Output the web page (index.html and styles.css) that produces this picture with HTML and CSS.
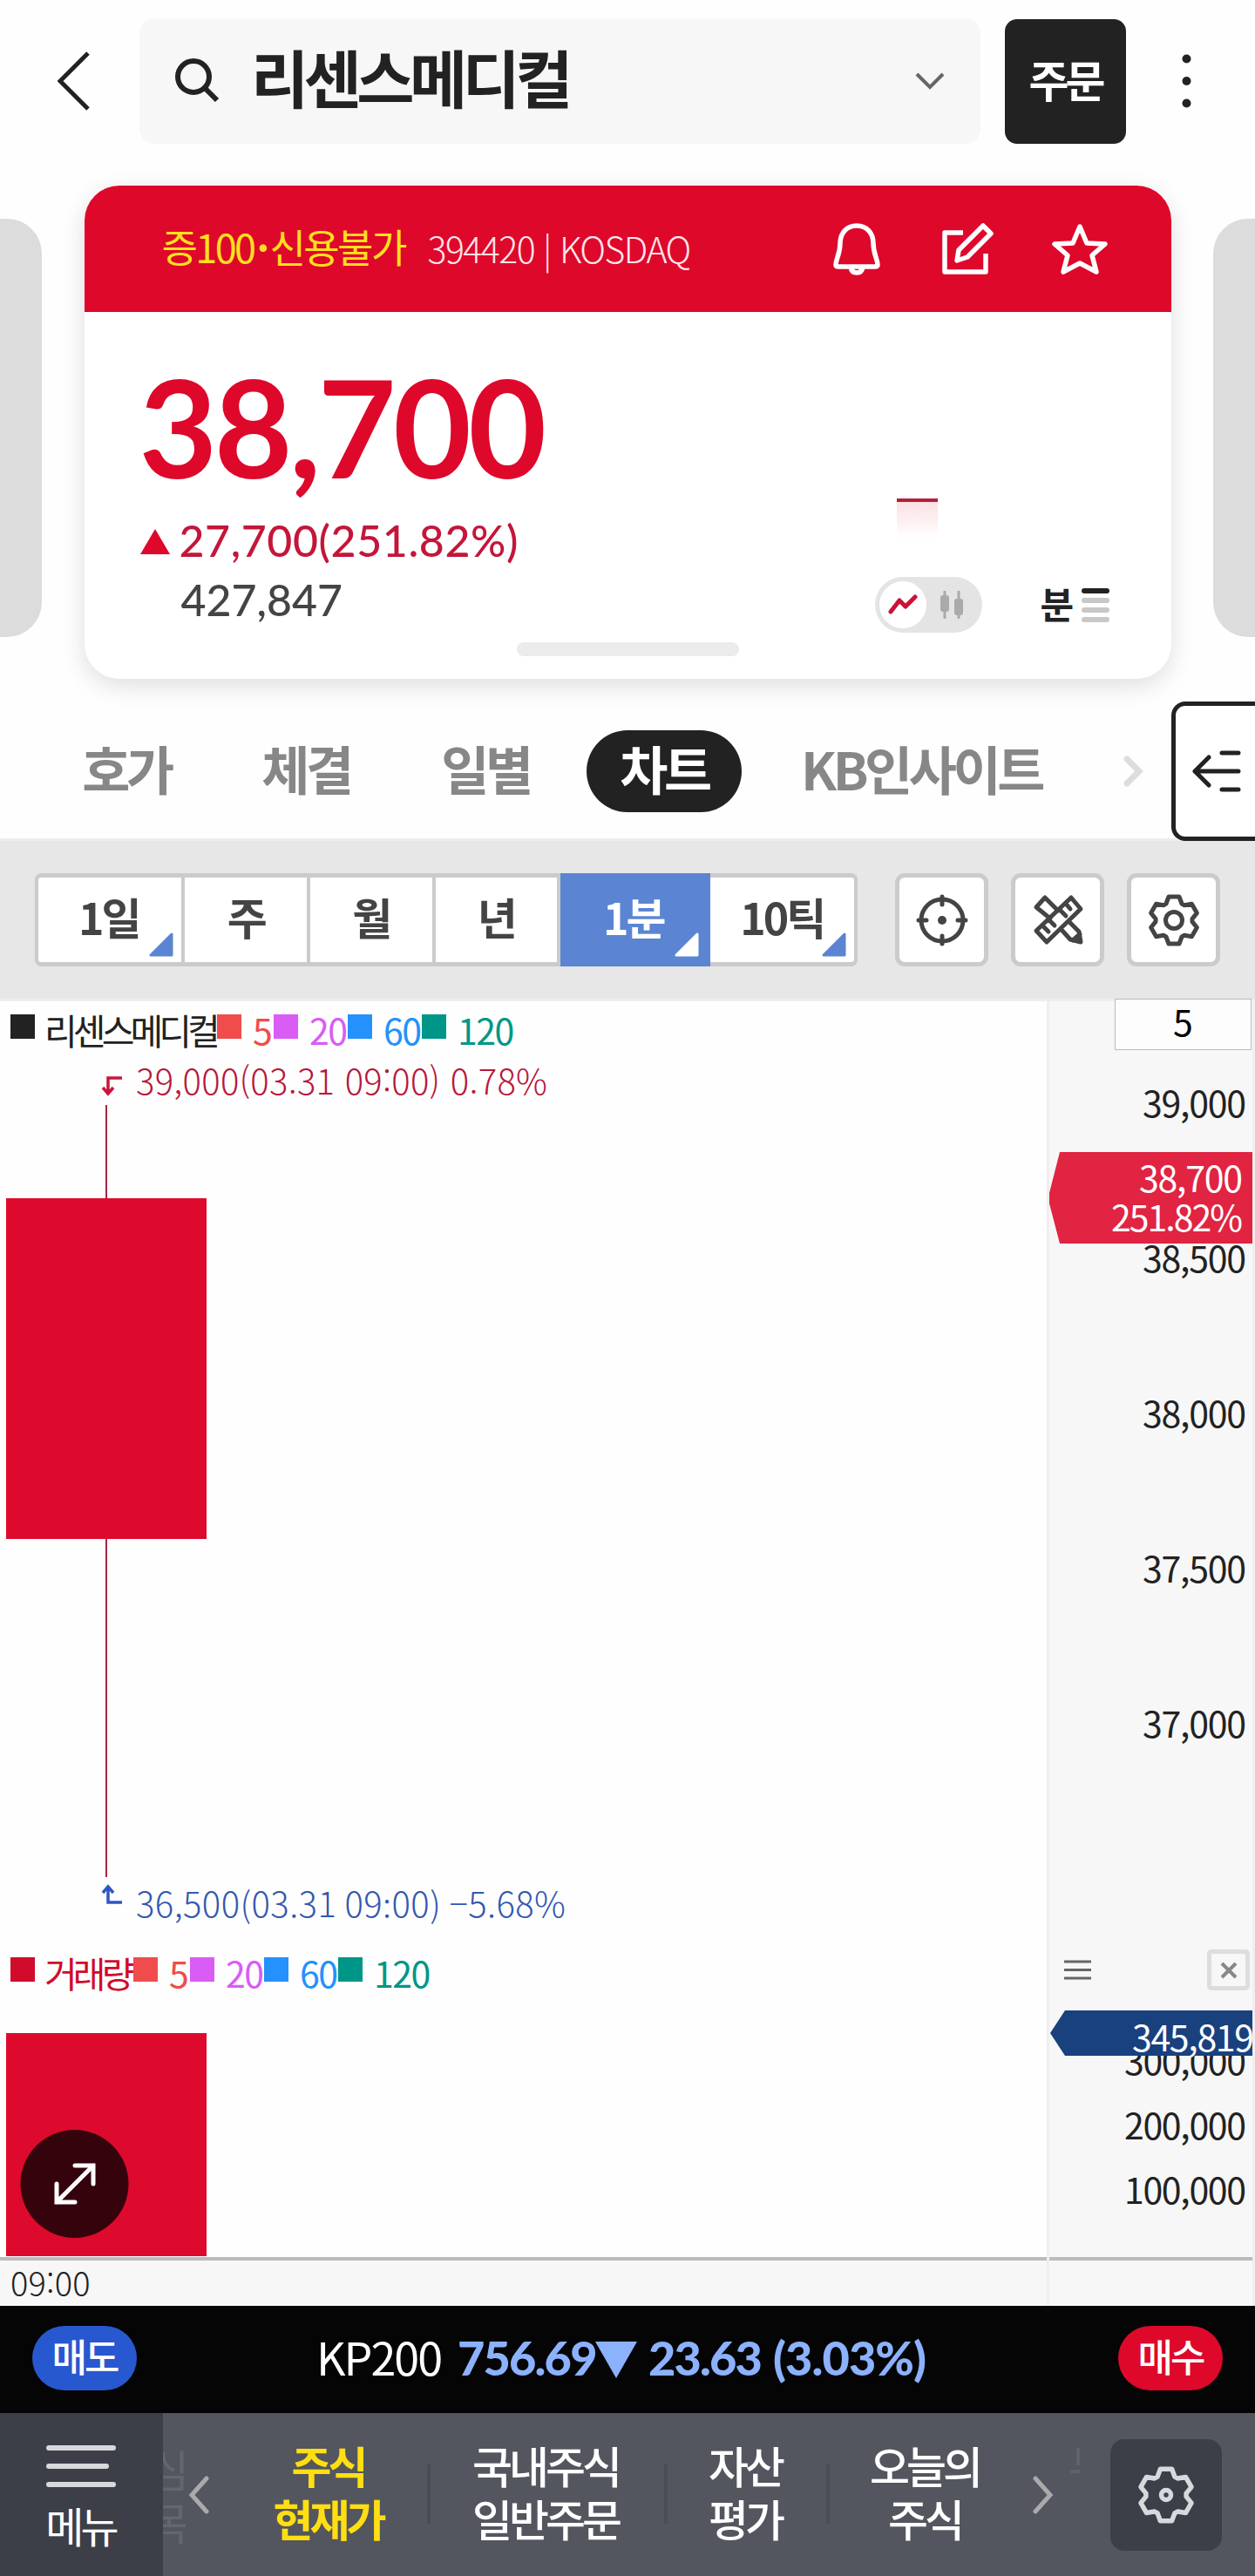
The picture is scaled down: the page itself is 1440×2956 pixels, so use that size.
FILE: index.html
```html
<!DOCTYPE html>
<html lang="ko">
<head>
    <meta charset="utf-8">
    <title>리센스메디컬</title>
    <link rel="stylesheet" href="styles.css">
</head>
<body>

<header class="header">
    <svg class="back" viewBox="0 0 37 68"><path d="M35 2L3 34L35 66"/></svg>
    <div class="search">
        <svg class="search-icon" viewBox="0 0 52 52"><circle cx="21" cy="21" r="18"/><path d="M34 34L48 48"/></svg>
        <span class="search-name">리센스메디컬</span>
        <svg class="search-more" viewBox="0 0 34 20"><path d="M2 2L17 17L32 2"/></svg>
    </div>
    <div class="order">주문</div>
    <svg class="dots" viewBox="0 0 11 62"><circle cx="5.5" cy="5.5" r="5"/><circle cx="5.5" cy="31" r="5"/><circle cx="5.5" cy="56.5" r="5"/></svg>
</header>

<section class="carousel">
    <div class="side left"></div>
    <div class="card">
        <div class="card-head">
            <span class="credit">증100<b>·</b>신용불가</span>
            <span class="code">394420 | KOSDAQ</span>
            <div class="card-icons">
                <svg class="bell" viewBox="0 0 54 60"><path d="M27 3C15 3 8 12 8 23C8 36 3 41 3 48Q3 50 6 50H48Q51 50 51 48C51 41 46 36 46 23C46 12 39 3 27 3ZM20 50Q21 57 27 57T34 50"/></svg>
                <svg class="edit" viewBox="0 0 60 60"><path d="M24 11H3V56H50V35M17 43L19 31L47 3L56 12L29 39Z"/></svg>
                <svg class="star" viewBox="0 0 64 60"><path d="M32 4L40 23L61 24L46 37L51 56L32 46L13 56L18 37L3 24L24 23Z"/></svg>
            </div>
        </div>
        <div class="card-body">
            <div class="price">38,700</div>
            <div class="change"><i class="up"></i>27,700(251.82%)</div>
            <div class="volume">427,847</div>
            <div class="handle"></div>
            <div class="mini"></div>
            <div class="card-tools">
                <div class="toggle">
                    <span class="knob"><svg viewBox="0 0 34 24"><path d="M3 20L13 7L20 14L31 3"/></svg></span>
                    <svg class="candles" viewBox="0 0 28 32"><path d="M6 0V32M22 0V32"/><rect x="1" y="5" width="10" height="19" rx="3"/><rect x="17" y="9" width="10" height="19" rx="3"/></svg>
                </div>
                <span class="unit">분</span>
                <div class="bars"><i class="on"></i><i></i><i></i><i></i></div>
            </div>
        </div>
    </div>
    <div class="side right"></div>
</section>

<nav class="tabs">
    <span class="tab">호가</span>
    <span class="tab">체결</span>
    <span class="tab">일별</span>
    <span class="tab active">차트</span>
    <span class="tab wide">KB인사이트</span>
    <svg class="tab-next" viewBox="0 0 24 36"><path d="M4 4L18 18L4 32"/></svg>
    <div class="drawer"><svg viewBox="0 0 56 50"><path d="M3 25H53M19 9L3 25L19 41M34 4H53M34 46H53"/></svg></div>
</nav>

<section class="toolbar">
    <div class="periods">
        <div class="period day">1일<svg viewBox="0 0 28 28"><path d="M26 2V26H2Z"/></svg></div>
        <div class="period">주</div>
        <div class="period">월</div>
        <div class="period">년</div>
        <div class="period minute">1분<svg viewBox="0 0 28 28"><path d="M26 2V26H2Z"/></svg></div>
        <div class="period tick">10틱<svg viewBox="0 0 28 28"><path d="M26 2V26H2Z"/></svg></div>
    </div>
    <div class="tool"><svg viewBox="-30 -30 60 60"><circle r="24"/><circle class="dot" r="5"/><path d="M0 -27V-18M0 18V27M-27 0H-18M18 0H27"/></svg></div>
    <div class="tool"><svg viewBox="-30 -30 60 60"><path d="M15 -26L26 -13L-13 25L-25 12ZM9 -19L14 -13M2 -12L9 -5M-10 0L-4 6M-17 7L-11 13M-9 -2L-25 -15L-15 -26L0 -11M5 12L14 22L26 25L24 13L14 3M17 23L25 16"/></svg></div>
    <div class="tool">
        <svg viewBox="-30 -30 60 60">
            <symbol id="gear" viewBox="-30 -30 60 60"><path d="M-9 -19L-6 -27H6L9 -19L12 -17.3L20.4 -18.7L26.4 -8.3L21 -1.7V1.7L26.4 8.3L20.4 18.7L12 17.3L9 19L6 27H-6L-9 19L-12 17.3L-20.4 18.7L-26.4 8.3L-21 1.7V-1.7L-26.4 -8.3L-20.4 -18.7L-12 -17.3Z"/></symbol>
            <use href="#gear" x="-30" y="-30" width="60" height="60"/>
            <circle r="9.5"/>
        </svg>
    </div>
</section>

<section class="chart">
    <div class="plot">
        <div class="legend">
            <span class="item name"><i></i>리센스메디컬</span>
            <span class="item ma5"><i></i>5</span>
            <span class="item ma20"><i></i>20</span>
            <span class="item ma60"><i></i>60</span>
            <span class="item ma120"><i></i>120</span>
        </div>
        <svg class="price-plot" viewBox="0 1207 1201 1024">
            <path class="mark high" d="M140 1237H124V1254M118 1248L124 1255L130 1248"/>
            <text class="high-text" x="156" y="1256" textLength="472">39,000(03.31 09:00) 0.78%</text>
            <path class="wick" d="M122 1268V2154"/>
            <rect class="candle" x="7" y="1375" width="230" height="391"/>
            <path class="mark low" d="M140 2183H124V2166M118 2172L124 2165L130 2172"/>
            <text class="low-text" x="156" y="2200" textLength="493">36,500(03.31 09:00) −5.68%</text>
        </svg>
        <div class="legend">
            <span class="item vol"><i></i>거래량</span>
            <span class="item ma5"><i></i>5</span>
            <span class="item ma20"><i></i>20</span>
            <span class="item ma60"><i></i>60</span>
            <span class="item ma120"><i></i>120</span>
        </div>
        <svg class="volume-plot" viewBox="0 2289 1201 301">
            <rect class="candle" x="7" y="2333" width="230" height="256"/>
            <circle class="expand" cx="85.5" cy="2506" r="62"/>
            <path class="expand-arrow" d="M65 2527L107 2485M86 2485H107V2506M65 2506V2527H86"/>
        </svg>
        <div class="time">09:00</div>
    </div>
    <div class="axis">
        <div class="count">5</div>
        <svg class="price-axis" viewBox="1204 1205 233 1026">
            <text x="1430" y="1282" textLength="119">39,000</text>
            <text x="1430" y="1460" textLength="119">38,500</text>
            <text x="1430" y="1638" textLength="119">38,000</text>
            <text x="1430" y="1816" textLength="119">37,500</text>
            <text x="1430" y="1994" textLength="119">37,000</text>
            <path class="tag-now" d="M1216 1322H1437V1427H1216L1204 1381V1369Z"/>
            <text class="tag-text" x="1426" y="1368" textLength="119">38,700</text>
            <text class="tag-text" x="1426" y="1413" textLength="151">251.82%</text>
        </svg>
        <div class="axis-tools">
            <svg class="lines" viewBox="0 0 33 23"><path d="M1 2H32M1 11.5H32M1 21H32"/></svg>
            <div class="close"><svg viewBox="0 0 20 20"><path d="M2 2L18 18M18 2L2 18"/></svg></div>
        </div>
        <svg class="volume-axis" viewBox="1204 2290 233 300">
            <text x="1430" y="2381" textLength="140">300,000</text>
            <text x="1430" y="2455" textLength="140">200,000</text>
            <text x="1430" y="2529" textLength="140">100,000</text>
            <path class="tag-volume" d="M1222 2307H1437V2359H1222L1205 2333Z"/>
            <text class="tag-text" x="1439" y="2354" textLength="140">345,819</text>
        </svg>
        <div class="axis-foot"></div>
    </div>
</section>

<section class="ticker">
    <span class="pill sell">매도</span>
    <span class="index">KP200</span>
    <span class="value">756.69</span>
    <i class="down"></i>
    <span class="value diff">23.63</span>
    <span class="value rate">(3.03%)</span>
    <span class="pill buy">매수</span>
</section>

<footer class="bottom">
    <div class="menu">
        <svg viewBox="0 0 80 48"><path d="M3 3H77M3 24H69M3 45H77"/></svg>
        메뉴
    </div>
    <div class="ghost">관심<br>종목</div>
    <svg class="nav-arrow" viewBox="0 0 24 44"><path d="M21 3L4 22L21 41"/></svg>
    <div class="links">
        <div class="link current">주식<br>현재가</div>
        <div class="link long">국내주식<br>일반주문</div>
        <div class="link asset">자산<br>평가</div>
        <div class="link today">오늘의<br>주식</div>
    </div>
    <svg class="nav-arrow next" viewBox="0 0 24 44"><path d="M3 3L20 22L3 41"/></svg>
    <svg class="ghost-mark" viewBox="0 0 12 30"><path d="M9 0V20M0 27H11"/></svg>
    <div class="settings">
        <svg viewBox="-30 -30 60 60"><use href="#gear" x="-30" y="-30" width="60" height="60"/><circle r="5"/></svg>
    </div>
</footer>

</body>
</html>
```

FILE: styles.css
```css
* {
    box-sizing: border-box;
}
body {
    margin: 0;
    width: 1440px;
    background: #fefefe;
    color: #222;
    font-family: "Noto Sans CJK KR", sans-serif;
    white-space: nowrap;
}
svg {
    display: block;
    flex: none;
    fill: none;
    stroke: #222;
    stroke-width: 5;
}

/* header */
.header {
    display: flex;
    align-items: center;
    height: 165px;
    padding: 21px 0 0 66px;
}
.back {
    width: 37px;
    height: 68px;
}
.search {
    display: flex;
    align-items: center;
    width: 965px;
    height: 144px;
    margin-left: 57px;
    padding: 0 41px;
    border-radius: 17px;
    background: #f7f7f7;
}
.search-icon {
    width: 52px;
    height: 52px;
    stroke-width: 6;
}
.search-name {
    margin: -13px 0 0 35px;
    font-size: 72px;
    font-weight: 700;
    line-height: 100px;
    letter-spacing: -5.6px;
}
.search-more {
    width: 34px;
    height: 20px;
    margin-left: auto;
    stroke: #666;
    stroke-width: 4;
}
.order {
    width: 139px;
    height: 143px;
    margin-left: 28px;
    border-radius: 14px;
    background: #222;
    color: #fff;
    font-size: 50px;
    font-weight: 700;
    line-height: 137px;
    letter-spacing: -4px;
    text-align: center;
}
.dots {
    width: 11px;
    height: 62px;
    margin-left: 64px;
    fill: #222;
    stroke: none;
}

/* stock card */
.carousel {
    display: flex;
    justify-content: space-between;
    padding-top: 48px;
}
.side {
    width: 48px;
    height: 480px;
    margin-top: 38px;
    background: #dcdcdc;
}
.left {
    border-radius: 0 40px 40px 0;
}
.right {
    border-radius: 40px 0 0 40px;
}
.card {
    width: 1247px;
    height: 566px;
    border-radius: 40px;
    background: #fff;
    box-shadow: 0 8px 28px rgba(0, 0, 0, 0.13);
}
.card-head {
    display: flex;
    align-items: center;
    height: 145px;
    padding: 0 72px 0 89px;
    border-radius: 40px 40px 0 0;
    background: #de082b;
}
.credit {
    width: 305px;
    margin-top: -6px;
    color: #ffe01e;
    font-size: 45px;
    letter-spacing: -2.6px;
}
.credit b {
    margin: 0 3px;
}
.code {
    margin-top: -4px;
    color: #ffe6ea;
    font-size: 41px;
    font-weight: 300;
    letter-spacing: -1.5px;
}
.card-icons {
    display: flex;
    gap: 71px;
    margin-left: auto;
}
.card-icons svg {
    height: 60px;
    stroke: #fff;
    stroke-width: 5.5;
    stroke-linejoin: round;
}
.bell {
    width: 54px;
}
.edit {
    width: 60px;
}
.star {
    width: 66px;
    margin-left: -6px;
}
.card-body {
    position: relative;
    height: 421px;
    padding: 56px 0 0 64px;
    font-family: Lato, sans-serif;
}
.price {
    margin-left: -1px;
    color: #de082b;
    font-size: 155px;
    font-weight: 700;
    line-height: 150px;
    letter-spacing: -3.6px;
}
.change {
    display: flex;
    align-items: center;
    height: 70px;
    margin-top: 21px;
    color: #c4163a;
    font-size: 50px;
    font-weight: 500;
    letter-spacing: 0.6px;
}
.up {
    margin: 3px 11px 0 0;
    border: 17px solid transparent;
    border-top: 0;
    border-bottom: 29px solid #de082b;
}
.volume {
    height: 68px;
    padding-left: 47px;
    color: #444;
    font-size: 50px;
    font-weight: 500;
    line-height: 67px;
}
.handle {
    width: 255px;
    height: 16px;
    margin: 14px 0 0 432px;
    border-radius: 8px;
    background: #ebebeb;
}
.mini {
    position: absolute;
    left: 932px;
    top: 214px;
    width: 47px;
    height: 46px;
    border-top: 4px solid #b51f3a;
    background: linear-gradient(#fbe1e3, #fff);
}
.card-tools {
    position: absolute;
    left: 907px;
    top: 304px;
    display: flex;
    align-items: center;
}
.toggle {
    display: flex;
    align-items: center;
    width: 123px;
    height: 64px;
    padding-left: 5px;
    border-radius: 32px;
    background: #e4e4e4;
}
.knob {
    display: flex;
    align-items: center;
    justify-content: center;
    width: 54px;
    height: 54px;
    border-radius: 50%;
    background: #fff;
}
.knob svg {
    width: 34px;
    height: 24px;
    stroke: #cc1239;
    stroke-linecap: round;
    stroke-linejoin: round;
}
.candles {
    width: 28px;
    height: 32px;
    margin-left: 15px;
    fill: #aaa;
    stroke: #aaa;
    stroke-width: 3;
}
.candles rect {
    stroke: none;
}
.unit {
    margin: -4px 9px 0 67px;
    font-family: "Noto Sans CJK KR", sans-serif;
    font-size: 42px;
    font-weight: 700;
    line-height: 50px;
}
.bars {
    display: flex;
    flex-direction: column;
    gap: 5px;
}
.bars i {
    width: 32px;
    height: 6px;
    border-radius: 3px;
    background: #c8c8c8;
}
.bars .on {
    background: #222;
}

/* tabs */
.tabs {
    position: relative;
    display: flex;
    align-items: center;
    height: 160px;
    margin-top: 26px;
    padding-left: 42px;
}
.tab {
    width: 206px;
    height: 94px;
    color: #878787;
    font-size: 60px;
    font-weight: 700;
    line-height: 85px;
    letter-spacing: -4.5px;
    text-align: center;
}
.active {
    width: 178px;
    margin: 0 14px 0 13px;
    border-radius: 47px;
    background: #222;
    color: #fff;
}
.wide {
    width: 276px;
    margin-left: 54px;
}
.tab-next {
    width: 24px;
    height: 36px;
    margin-left: 94px;
    stroke: #ddd;
    stroke-width: 7;
    stroke-linecap: round;
}
.drawer {
    display: flex;
    align-items: center;
    width: 96px;
    height: 160px;
    margin-left: auto;
    padding-left: 19px;
    border: 5px solid #222;
    border-right: 0;
    border-radius: 16px 0 0 16px;
    background: #fff;
}
.drawer svg {
    width: 56px;
    height: 50px;
    stroke-linecap: round;
    stroke-linejoin: round;
}

/* toolbar */
.toolbar {
    display: flex;
    align-items: center;
    height: 187px;
    margin-top: -3px;
    padding-left: 40px;
    border-top: 3px solid #eee;
    border-bottom: 3px solid #eee;
    background: #e7e7e7;
}
.periods {
    display: flex;
    width: 944px;
    height: 107px;
    margin-right: 17px;
    border-radius: 8px;
    background: #cbcbcb;
}
.period {
    position: relative;
    width: 144px;
    height: 107px;
    border: solid #cbcbcb;
    border-width: 5px 4px 5px 0;
    background: #fff;
    color: #444;
    font-size: 50px;
    font-weight: 700;
    line-height: 88px;
    letter-spacing: -3px;
    text-align: center;
}
.day {
    width: 173px;
    padding-right: 3px;
    border-left-width: 4px;
    border-radius: 8px 0 0 8px;
}
.minute {
    width: 172px;
    border-color: #5b85d2;
    background: #5b85d2;
    color: #fff;
}
.tick {
    width: 170px;
    border-radius: 0 8px 8px 0;
}
.period svg {
    position: absolute;
    right: 9px;
    bottom: 6px;
    width: 28px;
    height: 28px;
    fill: #5b85d2;
    stroke: #5b85d2;
    stroke-width: 3;
    stroke-linejoin: round;
}
.minute svg {
    fill: #fff;
    stroke: #fff;
}
.tool {
    display: flex;
    align-items: center;
    justify-content: center;
    width: 107px;
    height: 107px;
    margin-left: 26px;
    border: 5px solid #cbcbcb;
    border-radius: 11px;
    background: #fff;
}
.tool svg {
    width: 60px;
    height: 60px;
    stroke: #444;
    stroke-linecap: round;
    stroke-linejoin: round;
}
.tool .dot {
    fill: #444;
    stroke: none;
}

/* chart */
.chart {
    display: flex;
    height: 1497px;
}
.plot {
    width: 1201px;
}
.legend {
    display: flex;
    height: 58px;
    padding: 15px 0 0 12px;
    font-size: 41px;
    line-height: 34px;
    letter-spacing: -1.5px;
}
.item {
    display: flex;
}
.item i {
    width: 28px;
    height: 28px;
    margin-right: 13px;
    background: currentColor;
}
.name {
    width: 237px;
    letter-spacing: -4.9px;
}
.vol {
    width: 141px;
    color: #d00b2c;
    letter-spacing: -4.9px;
}
.name i,
.vol i {
    margin-right: 11px;
}
.ma5 {
    width: 65px;
    color: #f04c4c;
}
.ma20 {
    width: 85px;
    color: #d95cf5;
}
.ma60 {
    width: 85px;
    color: #2491fc;
}
.ma120 {
    color: #009687;
}
.price-plot {
    width: 1201px;
    height: 1024px;
}
.volume-plot {
    width: 1201px;
    height: 301px;
}
.plot text {
    stroke: none;
    font-size: 40px;
    font-weight: 300;
}
.high-text {
    fill: #b8173a;
}
.low-text {
    fill: #3457b0;
}
.mark {
    stroke-width: 3.5;
}
.high {
    stroke: #c9163a;
}
.low {
    stroke: #2d57c4;
}
.wick {
    stroke: #a32843;
    stroke-width: 2;
}
.candle {
    fill: #dd0a2d;
    stroke: none;
}
.expand {
    fill: #35030b;
    stroke: none;
}
.expand-arrow {
    stroke: #fff;
    stroke-linecap: round;
}
.time {
    height: 56px;
    padding-left: 12px;
    border-top: 4px solid #bbb;
    background: #f7f7f7;
    font-size: 38px;
    font-weight: 300;
    line-height: 49px;
    letter-spacing: 0.2px;
}
.axis {
    width: 239px;
    border: solid #efefef;
    border-width: 0 3px;
    background: #f7f7f7;
}
.count {
    position: relative;
    width: 157px;
    height: 59px;
    margin: -3px 0 0 75px;
    border: 1px solid #bbb;
    background: #fdfdfd;
    color: #000;
    font-size: 41px;
    line-height: 49px;
    text-align: center;
}
.price-axis {
    width: 233px;
    height: 1026px;
}
.volume-axis {
    width: 233px;
    height: 300px;
}
.axis text {
    fill: #222;
    stroke: none;
    font-size: 41px;
    text-anchor: end;
}
.axis .tag-text {
    fill: #fff;
}
.tag-now {
    fill: #e02442;
    stroke: none;
}
.tag-volume {
    fill: #19417e;
    stroke: none;
}
.axis-tools {
    display: flex;
    align-items: center;
    justify-content: space-between;
    height: 59px;
    padding: 0 3px 0 16px;
}
.lines {
    width: 33px;
    height: 23px;
    stroke: #666;
    stroke-width: 3;
}
.close {
    display: flex;
    align-items: center;
    justify-content: center;
    width: 49px;
    height: 47px;
    border: 5px solid #ddd;
    border-radius: 5px;
}
.close svg {
    width: 20px;
    height: 20px;
    stroke: #888;
    stroke-width: 4;
}
.axis-foot {
    height: 56px;
    border-top: 4px solid #bbb;
}

/* index ticker */
.ticker {
    display: flex;
    align-items: center;
    height: 123px;
    padding: 0 37px;
    background: #050505;
}
.pill {
    width: 120px;
    height: 74px;
    margin-top: -3px;
    border-radius: 37px;
    color: #fff;
    font-size: 44px;
    font-weight: 500;
    line-height: 69px;
    letter-spacing: -3px;
    text-align: center;
}
.sell {
    background: #2858d0;
}
.buy {
    margin-left: auto;
    background: #de082b;
}
.index {
    width: 162px;
    margin: -9px 0 0 206px;
    color: #fff;
    font-size: 52px;
    letter-spacing: -2px;
}
.value {
    width: 158px;
    margin-top: -5px;
    color: #8cb1fd;
    font-family: Lato, sans-serif;
    font-size: 54px;
    font-weight: 900;
    letter-spacing: -1.8px;
}
.down {
    margin-right: 13px;
    border: 24px solid transparent;
    border-top: 42px solid #8cb1fd;
    border-bottom: 0;
}
.diff {
    width: 143px;
}
.rate {
    letter-spacing: -0.9px;
}

/* bottom navigation */
.bottom {
    display: flex;
    align-items: center;
    height: 187px;
    background: #53565e;
    color: #fff;
    font-size: 50px;
    line-height: 61px;
    text-align: center;
    letter-spacing: -4px;
}
.menu {
    display: flex;
    flex-direction: column;
    align-items: center;
    width: 187px;
    height: 187px;
    padding-top: 37px;
    padding-right: 2px;
    background: #3c3f47;
    font-size: 48px;
}
.menu svg {
    width: 80px;
    height: 48px;
    margin-bottom: 13px;
    stroke: #d7d9dd;
    stroke-width: 6;
    stroke-linecap: round;
}
.ghost {
    display: flex;
    justify-content: flex-end;
    width: 26px;
    overflow: hidden;
    color: #63666d;
}
.nav-arrow {
    width: 24px;
    height: 44px;
    margin-left: 3px;
    stroke: #aaa;
    stroke-linecap: round;
}
.links {
    display: flex;
    width: 922px;
    margin: -8px 0 0 20px;
}
.link {
    position: relative;
    font-weight: 500;
}
.link + .link::before {
    content: "";
    position: absolute;
    left: 0;
    top: 30px;
    width: 4px;
    height: 68px;
    background: #4a4d55;
}
.current {
    width: 230px;
    padding-left: 3px;
    color: #ffdf12;
    font-weight: 700;
}
.long {
    width: 272px;
}
.asset {
    width: 186px;
}
.today {
    width: 234px;
    padding-right: 8px;
}
.next {
    margin-left: 3px;
}
.ghost-mark {
    width: 12px;
    height: 30px;
    margin: -78px 0 0 19px;
    stroke: #5f626a;
    stroke-width: 4;
}
.settings {
    display: flex;
    align-items: center;
    justify-content: center;
    width: 128px;
    height: 128px;
    margin-left: auto;
    margin-right: 38px;
    border-radius: 16px;
    background: #3b3f47;
}
.settings svg {
    width: 66px;
    height: 66px;
    stroke: #d7d9dd;
    stroke-linejoin: round;
}
```
